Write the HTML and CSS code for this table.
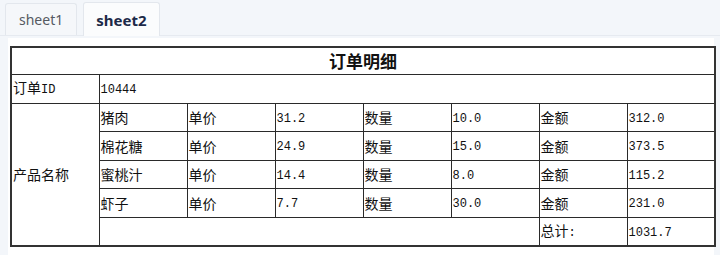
FILE: index.html
```html
<!DOCTYPE html>
<html lang="zh">
<head>
<meta charset="utf-8">
<link rel="stylesheet" href="styles.css">
</head>
<body>
<div class="tabs">
  <div class="tab">sheet1</div>
  <div class="tab active">sheet2</div>
</div>
<div class="panel">
  <table class="sheet">
    <colgroup>
      <col class="c"><col class="c"><col class="c"><col class="c"><col class="c"><col class="c"><col class="c"><col class="c">
    </colgroup>
    <tr><td colspan="8" class="title">订单明细</td></tr>
    <tr><td>订单<span class="num">ID</span></td><td colspan="7" class="num">10444</td></tr>
    <tr><td rowspan="5">产品名称</td><td>猪肉</td><td>单价</td><td class="num">31.2</td><td>数量</td><td class="num">10.0</td><td>金额</td><td class="num">312.0</td></tr>
    <tr><td>棉花糖</td><td>单价</td><td class="num">24.9</td><td>数量</td><td class="num">15.0</td><td>金额</td><td class="num">373.5</td></tr>
    <tr><td>蜜桃汁</td><td>单价</td><td class="num">14.4</td><td>数量</td><td class="num">8.0</td><td>金额</td><td class="num">115.2</td></tr>
    <tr><td>虾子</td><td>单价</td><td class="num">7.7</td><td>数量</td><td class="num">30.0</td><td>金额</td><td class="num">231.0</td></tr>
    <tr><td colspan="5"></td><td>总计<span class="num">:</span></td><td class="num">1031.7</td></tr>
  </table>
</div>
</body>
</html>
```
FILE: styles.css
```css
html, body {
  margin: 0;
  padding: 0;
  background: #f3f6fa;
  height: 100%;
}
body {
  font-family: "Noto Sans", "Noto Sans CJK SC", sans-serif;
}
.tabs {
  display: flex;
  align-items: flex-end;
  gap: 6px;
  height: 36px;
  padding-left: 5px;
  box-sizing: border-box;
  border-bottom: 1px solid #e6eaf0;
}
.tab {
  height: 32px;
  box-sizing: border-box;
  padding: 0 13px;
  display: flex;
  align-items: center;
  font-size: 14px;
  color: #555a62;
  background: #f5f7fa;
  border: 1px solid #e3e7ed;
  border-bottom: none;
  border-radius: 3px 3px 0 0;
}
.tab.active {
  color: #1d2a48;
  font-weight: 700;
  background: #fbfcfd;
  height: 34px;
  margin-bottom: -1px;
  font-size: 15px;
  padding: 0 12px;
}
.panel {
  margin: 2px 6px 0 8px;
  background: #ffffff;
  padding: 8px 2px 10px 2px;
  height: 217px;
  box-sizing: border-box;
}
.sheet {
  border-collapse: collapse;
  table-layout: fixed;
  width: 703px;
  border: 2px solid #333;
  font-family: "Noto Sans CJK SC", sans-serif;
  font-size: 14px;
  color: #111;
}
.sheet .c {
  width: 88px;
}
.sheet td {
  border: 1px solid #2a2a2a;
  height: 27.5px;
  padding: 0 1px;
  white-space: nowrap;
  overflow: hidden;
  line-height: 16px;
}
.sheet td.title {
  text-align: center;
  font-weight: 700;
  font-size: 17px;
  line-height: 20px;
  height: 26px;
}
.sheet td.num {
  padding-top: 3px;
  height: 24.5px;
}
.num {
  font-family: "Liberation Mono", monospace;
  font-size: 12px;
}
```
